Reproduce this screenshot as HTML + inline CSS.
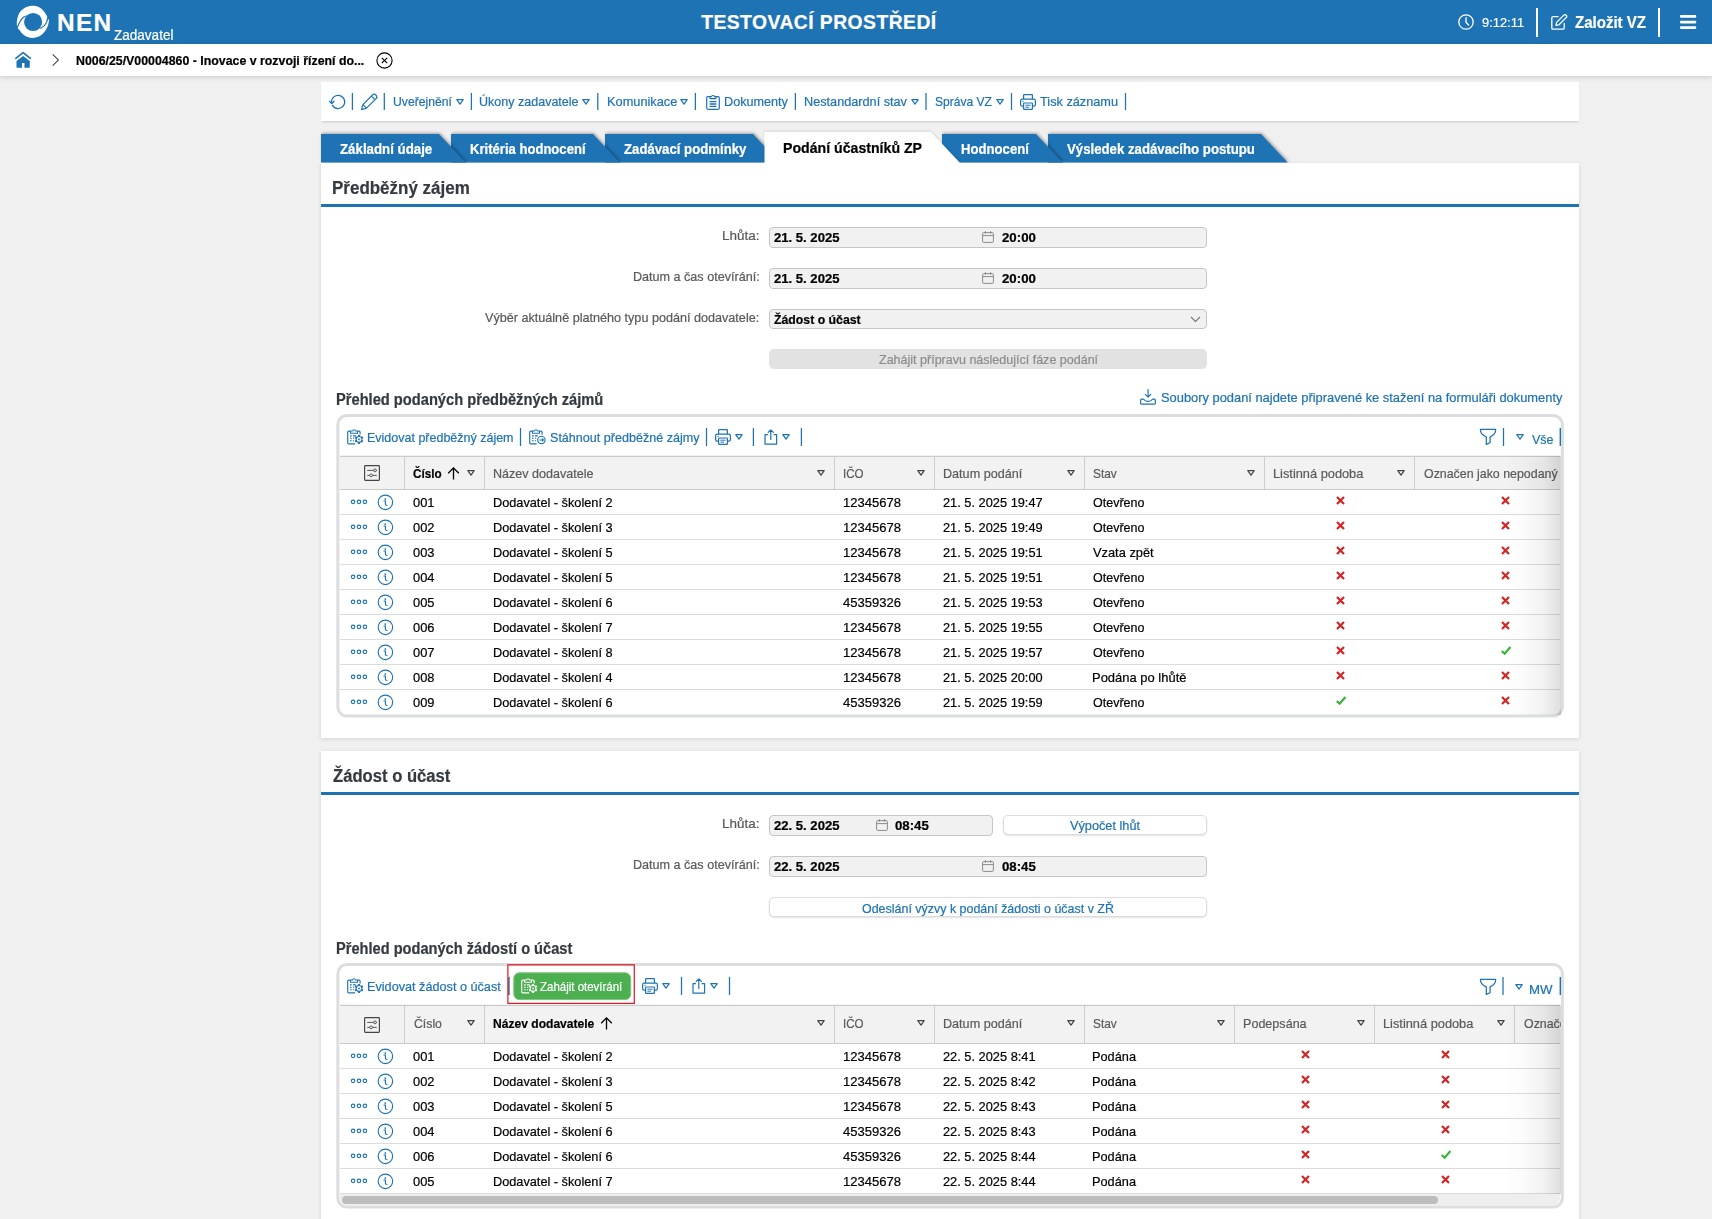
<!DOCTYPE html>
<html lang="cs"><head><meta charset="utf-8"><title>NEN</title>
<style>
html,body{margin:0;padding:0;}
body{width:1712px;height:1219px;overflow:hidden;background:#f0f0f0;font-family:"Liberation Sans",sans-serif;position:relative;}
.b{position:absolute;box-sizing:border-box;display:block;}
.t{position:absolute;white-space:nowrap;line-height:1;display:block;-webkit-text-stroke:0.22px;}
svg{overflow:visible;}
</style></head><body>
<div class="b" style="left:0px;top:0px;width:1712px;height:44px;background:#1e73b4;"></div>
<svg class="b" style="left:17px;top:6px;" width="32" height="32" viewBox="0 0 32 32"><path d="M0.04 20.90 C0.01 20.03 -0.35 17.62 -0.14 15.66 C0.07 13.70 0.46 11.09 1.30 9.16 C2.14 7.23 3.40 5.48 4.90 4.10 C6.40 2.72 8.55 1.58 10.30 0.86 C12.05 0.14 13.58 -0.22 15.40 -0.22 C17.22 -0.22 19.40 0.08 21.20 0.86 C23.00 1.64 24.82 3.09 26.20 4.47 C27.58 5.85 28.83 8.02 29.50 9.16 C30.17 10.30 30.27 10.22 30.20 11.30 C30.13 12.38 29.65 14.33 29.10 15.66 C28.55 16.99 27.92 18.22 26.90 19.30 C25.88 20.38 23.62 21.68 22.96 22.16 L16 16 L3 17 Z" fill="#fff"/><path d="M32.00 13.10 C31.97 13.53 32.05 14.43 31.80 15.70 C31.55 16.97 31.32 18.90 30.50 20.70 C29.68 22.50 28.33 24.87 26.90 26.50 C25.47 28.13 23.82 29.60 21.90 30.50 C19.98 31.40 17.52 31.90 15.40 31.90 C13.28 31.90 10.95 31.28 9.20 30.50 C7.45 29.72 5.98 28.23 4.90 27.20 C3.83 26.17 3.44 25.27 2.75 24.30 C2.06 23.33 0.64 22.72 0.76 21.40 C0.89 20.08 2.63 17.83 3.50 16.40 C4.37 14.97 5.17 13.83 6.00 12.80 C6.83 11.77 8.08 10.63 8.50 10.20 L16 16 L29 15 Z" fill="#fff"/><circle cx="16.1" cy="16" r="9.05" fill="#1e73b4"/><path d="M0.30 21.30 C0.71 20.42 1.89 17.51 2.75 16.00 C3.61 14.49 4.48 13.27 5.45 12.25 C6.42 11.23 8.07 10.29 8.60 9.90" fill="none" stroke="#1e73b4" stroke-width="1.1"/><path d="M31.00 11.90 C30.77 12.58 30.27 14.71 29.65 16.00 C29.03 17.29 28.38 18.57 27.30 19.65 C26.23 20.73 23.88 22.02 23.20 22.50" fill="none" stroke="#1e73b4" stroke-width="1.1"/></svg>
<span class="t" style="left:56.91px;top:11.35px;font-size:24.4px;font-weight:bold;color:#fff;letter-spacing:1.394px;">NEN</span>
<span class="t" style="left:113.79px;top:27.30px;font-size:15px;color:#fff;transform:scaleX(0.9023);transform-origin:0 0;">Zadavatel</span>
<span class="t" style="left:701.21px;top:12.66px;font-size:19.3px;font-weight:bold;color:#fff;letter-spacing:0.474px;">TESTOVACÍ PROSTŘEDÍ</span>
<svg class="b" style="left:1457.7px;top:14px;" width="16" height="16" viewBox="0 0 16 16"><circle cx="8" cy="8" r="7.2" fill="none" stroke="#fff" stroke-width="1.3"/><path d="M8 3.6 V8.2 L10.6 11" fill="none" stroke="#fff" stroke-width="1.3" stroke-linecap="round"/></svg>
<span class="t" style="left:1481.62px;top:15.69px;font-size:13.6px;color:#fff;transform:scaleX(0.9487);transform-origin:0 0;">9:12:11</span>
<div class="b" style="left:1536px;top:8px;width:2px;height:29px;background:#fff;"></div>
<svg class="b" style="left:1550.5px;top:14px;" width="17" height="16" viewBox="0 0 17 16"><path d="M7.6 2.6 H2 A1.2 1.2 0 0 0 0.8 3.8 V14 A1.2 1.2 0 0 0 2 15.2 H12 A1.2 1.2 0 0 0 13.2 14 V9" fill="none" stroke="#fff" stroke-width="1.3"/><path d="M5.6 8.4 L13 1 A1.3 1.3 0 0 1 14.9 1 L15.4 1.5 A1.3 1.3 0 0 1 15.4 3.4 L8 10.8 L5 11.4 Z" fill="none" stroke="#fff" stroke-width="1.3" stroke-linejoin="round"/></svg>
<span class="t" style="left:1575.22px;top:14.71px;font-size:16px;font-weight:bold;color:#fff;transform:scaleX(0.9395);transform-origin:0 0;">Založit VZ</span>
<div class="b" style="left:1658px;top:8px;width:2px;height:29px;background:#fff;"></div>
<svg class="b" style="left:1680px;top:14px;" width="16" height="16" viewBox="0 0 16 16"><rect x="0" y="1.1" width="16.2" height="2.7" rx="0.8" fill="#fff"/><rect x="0" y="6.7" width="16.2" height="2.7" rx="0.8" fill="#fff"/><rect x="0" y="12.2" width="16.2" height="2.7" rx="0.8" fill="#fff"/></svg>
<div class="b" style="left:0px;top:44px;width:1712px;height:32px;background:#fff;box-shadow:0 1px 5px rgba(0,0,0,.17);"></div>
<svg class="b" style="left:15px;top:51px;" width="17" height="18" viewBox="0 0 17 18"><path d="M0.8 7.3 L8.1 1.6 L15.4 7.3" fill="none" stroke="#1e73b4" stroke-width="1.7" stroke-linecap="round" stroke-linejoin="round"/><path d="M8.1 5.1 L14.8 10 V16 A0.7 0.7 0 0 1 14.1 16.7 H9.45 V12 H7 V16.7 H2.2 A0.7 0.7 0 0 1 1.5 16 V10 Z" fill="#1e73b4"/></svg>
<svg class="b" style="left:52px;top:54px;" width="8" height="13" viewBox="0 0 8 13"><path d="M0.7 0.4 L6.5 6 L0.7 11.6" fill="none" stroke="#44445a" stroke-width="1.05"/></svg>
<span class="t" style="left:75.90px;top:54.00px;font-size:13px;font-weight:bold;color:#000;transform:scaleX(0.9499);transform-origin:0 0;">N006/25/V00004860 - Inovace v rozvoji řízení do...</span>
<svg class="b" style="left:376.1px;top:51.5px;" width="17" height="17" viewBox="0 0 17 17"><circle cx="8.5" cy="8.5" r="7.6" fill="none" stroke="#000" stroke-width="1.1"/><path d="M5.8 5.8 L11.2 11.2 M11.2 5.8 L5.8 11.2" stroke="#000" stroke-width="1.1"/></svg>
<div class="b" style="left:321px;top:82px;width:1258px;height:39px;background:#fff;box-shadow:0 2px 2px -1px rgba(0,0,0,.16);"></div>
<svg class="b" style="left:329px;top:94px;" width="17" height="16" viewBox="0 0 17 16"><path d="M3.5 11.4 A6.6 6.6 0 1 0 2.55 8.6" fill="none" stroke="#1e73b4" stroke-width="1.25" stroke-linecap="round"/><path d="M0.4 7.2 L2.65 9.7 L5 7.2" fill="none" stroke="#1e73b4" stroke-width="1.25" stroke-linecap="round" stroke-linejoin="round"/></svg>
<svg class="b" style="left:350px;top:93px;" width="6" height="17"><rect x="1.77" y="0" width="1.25" height="17" fill="#1e73b4"/></svg>
<svg class="b" style="left:361px;top:94px;" width="17" height="17" viewBox="0 0 17 17"><path d="M0.5 15.6 L1.9 10.6 L11.5 1 A2.55 2.55 0 0 1 15.1 4.6 L5.5 14.2 Z M1.9 10.6 L5.5 14.2 M10.5 2.1 L14 5.6" fill="none" stroke="#1e73b4" stroke-width="1.2" stroke-linejoin="round"/></svg>
<svg class="b" style="left:382px;top:93px;" width="6" height="17"><rect x="1.68" y="0" width="1.25" height="17" fill="#1e73b4"/></svg>
<span class="t" style="left:392.79px;top:95.16px;font-size:13.4px;color:#1e73b4;transform:scaleX(0.9093);transform-origin:0 0;">Uveřejnění</span>
<svg class="b" style="left:456px;top:99px;" width="8" height="6" viewBox="0 0 8 6"><path d="M0.8 0.6 L7.2 0.6 L4 5.2 Z" fill="none" stroke="#1e73b4" stroke-width="1.2" stroke-linejoin="round"/></svg>
<svg class="b" style="left:469px;top:93px;" width="6" height="17"><rect x="1.77" y="0" width="1.25" height="17" fill="#1e73b4"/></svg>
<span class="t" style="left:479.36px;top:95.16px;font-size:13.4px;color:#1e73b4;transform:scaleX(0.9353);transform-origin:0 0;">Úkony zadavatele</span>
<svg class="b" style="left:582px;top:99px;" width="8" height="6" viewBox="0 0 8 6"><path d="M0.8 0.6 L7.2 0.6 L4 5.2 Z" fill="none" stroke="#1e73b4" stroke-width="1.2" stroke-linejoin="round"/></svg>
<svg class="b" style="left:595px;top:93px;" width="6" height="17"><rect x="2.17" y="0" width="1.25" height="17" fill="#1e73b4"/></svg>
<span class="t" style="left:606.58px;top:95.16px;font-size:13.4px;color:#1e73b4;transform:scaleX(0.9543);transform-origin:0 0;">Komunikace</span>
<svg class="b" style="left:680px;top:99px;" width="8" height="6" viewBox="0 0 8 6"><path d="M0.8 0.6 L7.2 0.6 L4 5.2 Z" fill="none" stroke="#1e73b4" stroke-width="1.2" stroke-linejoin="round"/></svg>
<svg class="b" style="left:693px;top:93px;" width="6" height="17"><rect x="1.77" y="0" width="1.25" height="17" fill="#1e73b4"/></svg>
<svg class="b" style="left:706px;top:94px;" width="14" height="16" viewBox="0 0 14 16"><rect x="0.7" y="2.6" width="12.6" height="12.7" rx="1.2" fill="none" stroke="#1e73b4" stroke-width="1.2"/><path d="M4 2.6 L5.4 2.6 A1.7 1.7 0 0 1 8.6 2.6 L10 2.6 L10 4.6 L4 4.6 Z" fill="#fff" stroke="#1e73b4" stroke-width="1.1" stroke-linejoin="round"/><path d="M3.6 7.6 H10.4 M3.6 10 H10.4 M3.6 12.4 H10.4" stroke="#1e73b4" stroke-width="1.3"/></svg>
<span class="t" style="left:723.99px;top:95.16px;font-size:13.4px;color:#1e73b4;transform:scaleX(0.9441);transform-origin:0 0;">Dokumenty</span>
<svg class="b" style="left:793px;top:93px;" width="6" height="17"><rect x="1.77" y="0" width="1.25" height="17" fill="#1e73b4"/></svg>
<span class="t" style="left:804.28px;top:95.16px;font-size:13.4px;color:#1e73b4;transform:scaleX(0.9473);transform-origin:0 0;">Nestandardní stav</span>
<svg class="b" style="left:911px;top:99px;" width="8" height="6" viewBox="0 0 8 6"><path d="M0.8 0.6 L7.2 0.6 L4 5.2 Z" fill="none" stroke="#1e73b4" stroke-width="1.2" stroke-linejoin="round"/></svg>
<svg class="b" style="left:924px;top:93px;" width="6" height="17"><rect x="1.38" y="0" width="1.25" height="17" fill="#1e73b4"/></svg>
<span class="t" style="left:935.46px;top:95.16px;font-size:13.4px;color:#1e73b4;transform:scaleX(0.8987);transform-origin:0 0;">Správa VZ</span>
<svg class="b" style="left:996px;top:99px;" width="8" height="6" viewBox="0 0 8 6"><path d="M0.8 0.6 L7.2 0.6 L4 5.2 Z" fill="none" stroke="#1e73b4" stroke-width="1.2" stroke-linejoin="round"/></svg>
<svg class="b" style="left:1009px;top:93px;" width="6" height="17"><rect x="1.88" y="0" width="1.25" height="17" fill="#1e73b4"/></svg>
<svg class="b" style="left:1020px;top:94px;" width="16" height="16" viewBox="0 0 16 16"><path d="M3.6 5.2 V1.2 A0.6 0.6 0 0 1 4.2 0.6 H11.8 A0.6 0.6 0 0 1 12.4 1.2 V5.2" fill="none" stroke="#1e73b4" stroke-width="1.2"/><rect x="0.6" y="5.2" width="14.8" height="7" rx="1.6" fill="none" stroke="#1e73b4" stroke-width="1.2"/><rect x="3.6" y="9" width="8.8" height="6.4" rx="0.6" fill="#fff" stroke="#1e73b4" stroke-width="1.2"/><path d="M5.4 11.2 H10.6 M5.4 13.2 H9 M2.4 7.4 H3.6" stroke="#1e73b4" stroke-width="1"/></svg>
<span class="t" style="left:1040.25px;top:95.16px;font-size:13.4px;color:#1e73b4;transform:scaleX(0.9506);transform-origin:0 0;">Tisk záznamu</span>
<svg class="b" style="left:1123px;top:93px;" width="6" height="17"><rect x="1.88" y="0" width="1.25" height="17" fill="#1e73b4"/></svg>
<div class="b" style="left:321px;top:163px;width:1258px;height:575px;background:#fff;box-shadow:0 1px 4px rgba(0,0,0,.13);"></div>
<div class="b" style="left:321px;top:751px;width:1258px;height:480px;background:#fff;box-shadow:0 1px 4px rgba(0,0,0,.13);"></div>
<svg class="b" style="left:0;top:0;filter:drop-shadow(1px -0.5px 1.5px rgba(0,0,0,.32));" width="1712" height="170"><polygon points="1048,134 1261,134 1287.8,162.6 1048,162.6" fill="#1e73b4"/></svg>
<svg class="b" style="left:0;top:0;filter:drop-shadow(1px -0.5px 1.5px rgba(0,0,0,.32));" width="1712" height="170"><polygon points="942,134 1036,134 1062.8,162.6 942,162.6" fill="#1e73b4"/></svg>
<svg class="b" style="left:0;top:0;filter:drop-shadow(1px -0.5px 1.5px rgba(0,0,0,.32));" width="1712" height="170"><polygon points="605,134 753,134 779.8,162.6 605,162.6" fill="#1e73b4"/></svg>
<svg class="b" style="left:0;top:0;filter:drop-shadow(1px -0.5px 1.5px rgba(0,0,0,.32));" width="1712" height="170"><polygon points="451,134 593,134 619.8,162.6 451,162.6" fill="#1e73b4"/></svg>
<svg class="b" style="left:0;top:0;filter:drop-shadow(1px -0.5px 1.5px rgba(0,0,0,.32));" width="1712" height="170"><polygon points="321,134 439,134 465.8,162.6 321,162.6" fill="#1e73b4"/></svg>
<svg class="b" style="left:0;top:0;filter:drop-shadow(0px -1px 1.2px rgba(0,0,0,.10));" width="1712" height="170"><polygon points="764.5,132 931,132 960.5,163.5 764.5,163.5" fill="#fff"/></svg>
<div class="b" style="left:321px;top:163px;width:1258px;height:8px;background:#fff;"></div>
<span class="t" style="left:339.67px;top:142.25px;font-size:14px;font-weight:bold;color:#fff;transform:scaleX(0.9486);transform-origin:0 0;">Základní údaje</span>
<span class="t" style="left:470.35px;top:142.25px;font-size:14px;font-weight:bold;color:#fff;transform:scaleX(0.9340);transform-origin:0 0;">Kritéria hodnocení</span>
<span class="t" style="left:623.67px;top:142.25px;font-size:14px;font-weight:bold;color:#fff;transform:scaleX(0.9416);transform-origin:0 0;">Zadávací podmínky</span>
<span class="t" style="left:783.38px;top:140.30px;font-size:15px;font-weight:bold;color:#000;transform:scaleX(0.9425);transform-origin:0 0;">Podání účastníků ZP</span>
<span class="t" style="left:961.05px;top:142.25px;font-size:14px;font-weight:bold;color:#fff;transform:scaleX(0.9385);transform-origin:0 0;">Hodnocení</span>
<span class="t" style="left:1066.93px;top:142.25px;font-size:14px;font-weight:bold;color:#fff;transform:scaleX(0.9436);transform-origin:0 0;">Výsledek zadávacího postupu</span>
<span class="t" style="left:332.30px;top:179.09px;font-size:18.8px;font-weight:bold;color:#343a40;transform:scaleX(0.9041);transform-origin:0 0;">Předběžný zájem</span>
<div class="b" style="left:321px;top:204px;width:1258px;height:3px;background:#1e73b4;"></div>
<span class="t" style="left:722.12px;top:228.80px;font-size:13px;color:#5a5a5a;transform:scaleX(1.0354);transform-origin:0 0;">Lhůta:</span>
<div class="b" style="left:769px;top:227px;width:438px;height:21px;background:#f1f1f1;border:1px solid #c6c6c6;border-radius:4px;"></div>
<span class="t" style="left:773.61px;top:231.90px;font-size:12.4px;font-weight:bold;color:#000;transform:scaleX(1.0557);transform-origin:0 0;">21. 5. 2025</span>
<svg class="b" style="left:982px;top:230.6px;" width="12" height="12" viewBox="0 0 12 12"><rect x="0.6" y="1.6" width="10.8" height="9.8" rx="1" fill="none" stroke="#8a8a8a" stroke-width="1"/><path d="M0.6 4.6 H11.4 M3.4 0.2 V2.8 M8.6 0.2 V2.8" stroke="#8a8a8a" stroke-width="1"/></svg>
<span class="t" style="left:1001.60px;top:231.90px;font-size:12.4px;font-weight:bold;color:#000;transform:scaleX(1.0688);transform-origin:0 0;">20:00</span>
<span class="t" style="left:632.89px;top:269.80px;font-size:13px;color:#5a5a5a;transform:scaleX(0.9683);transform-origin:0 0;">Datum a čas otevírání:</span>
<div class="b" style="left:769px;top:268px;width:438px;height:21px;background:#f1f1f1;border:1px solid #c6c6c6;border-radius:4px;"></div>
<span class="t" style="left:773.61px;top:272.90px;font-size:12.4px;font-weight:bold;color:#000;transform:scaleX(1.0557);transform-origin:0 0;">21. 5. 2025</span>
<svg class="b" style="left:982px;top:271.6px;" width="12" height="12" viewBox="0 0 12 12"><rect x="0.6" y="1.6" width="10.8" height="9.8" rx="1" fill="none" stroke="#8a8a8a" stroke-width="1"/><path d="M0.6 4.6 H11.4 M3.4 0.2 V2.8 M8.6 0.2 V2.8" stroke="#8a8a8a" stroke-width="1"/></svg>
<span class="t" style="left:1001.60px;top:272.90px;font-size:12.4px;font-weight:bold;color:#000;transform:scaleX(1.0688);transform-origin:0 0;">20:00</span>
<span class="t" style="left:485.30px;top:310.80px;font-size:13px;color:#5a5a5a;transform:scaleX(0.9703);transform-origin:0 0;">Výběr aktuálně platného typu podání dodavatele:</span>
<div class="b" style="left:769px;top:309px;width:438px;height:20px;background:#f1f1f1;border:1px solid #c6c6c6;border-radius:4px;"></div>
<span class="t" style="left:773.69px;top:313.90px;font-size:12.4px;font-weight:bold;color:#000;transform:scaleX(0.9907);transform-origin:0 0;">Žádost o účast</span>
<svg class="b" style="left:1190px;top:316px;" width="11" height="7" viewBox="0 0 11 7"><path d="M1 1 L5.5 5.4 L10 1" fill="none" stroke="#777" stroke-width="1.1"/></svg>
<div class="b" style="left:769px;top:349px;width:438px;height:20px;background:#e2e2e2;border-radius:5px;"></div>
<span class="t" style="left:878.82px;top:352.91px;font-size:13.1px;color:#8c8c8c;transform:scaleX(0.9555);transform-origin:0 0;">Zahájit přípravu následující fáze podání</span>
<span class="t" style="left:336.05px;top:391.86px;font-size:16px;font-weight:bold;color:#343a40;transform:scaleX(0.9167);transform-origin:0 0;">Přehled podaných předběžných zájmů</span>
<svg class="b" style="left:1140px;top:389px;" width="16" height="16" viewBox="0 0 16 16"><path d="M8.1 0.5 V8 M5.3 5.4 L8.1 8.2 L10.8 5.4" fill="none" stroke="#1e73b4" stroke-width="1.2" stroke-linecap="round" stroke-linejoin="round"/><path d="M1.6 10.2 H3.7 Q5 12.4 8.1 12.4 Q11.2 12.4 12.5 10.2 H14.4 A1 1 0 0 1 15.4 11.2 V14.1 A1 1 0 0 1 14.4 15.1 H1.6 A1 1 0 0 1 0.6 14.1 V11.2 A1 1 0 0 1 1.6 10.2 Z" fill="none" stroke="#1e73b4" stroke-width="1.2" stroke-linejoin="round"/></svg>
<span class="t" style="left:1160.62px;top:391.31px;font-size:13.1px;color:#1e73b4;transform:scaleX(0.9830);transform-origin:0 0;">Soubory podaní najdete připravené ke stažení na formuláři dokumenty</span>
<svg class="b" style="left:330px;top:410px;" width="1240" height="312"><rect x="7.85" y="5.5" width="1224.5" height="300.6" rx="9" fill="#fff" stroke="#dcdddf" stroke-width="3"/></svg>
<div class="b" style="left:340px;top:456px;width:1220px;height:34px;background:#f2f2f2;border-top:1px solid #cbcbcb;border-bottom:1px solid #c9c9c9;box-shadow:0 -1px 0 rgba(0,0,0,.05);"></div>
<div class="b" style="left:404px;top:457px;width:1px;height:32px;background:#cdcdcd;"></div>
<div class="b" style="left:484px;top:457px;width:1px;height:32px;background:#cdcdcd;"></div>
<div class="b" style="left:834px;top:457px;width:1px;height:32px;background:#cdcdcd;"></div>
<div class="b" style="left:934px;top:457px;width:1px;height:32px;background:#cdcdcd;"></div>
<div class="b" style="left:1084px;top:457px;width:1px;height:32px;background:#cdcdcd;"></div>
<div class="b" style="left:1264px;top:457px;width:1px;height:32px;background:#cdcdcd;"></div>
<div class="b" style="left:1414px;top:457px;width:1px;height:32px;background:#cdcdcd;"></div>
<svg class="b" style="left:364px;top:465.0px;" width="16" height="16" viewBox="0 0 16 16"><rect x="0.6" y="0.6" width="14.8" height="14.8" rx="0.8" fill="none" stroke="#444" stroke-width="1.15"/><path d="M3.2 5.4 H12.8 M3.2 10.4 H12.8" stroke="#444" stroke-width="0.9"/><circle cx="11" cy="5.4" r="1.4" fill="#f2f2f2" stroke="#444" stroke-width="0.85"/><circle cx="7.1" cy="10.4" r="1.4" fill="#f2f2f2" stroke="#444" stroke-width="0.85"/></svg>
<span class="t" style="left:412.53px;top:466.69px;font-size:13.6px;font-weight:bold;color:#000;transform:scaleX(0.8625);transform-origin:0 0;">Číslo</span>
<svg class="b" style="left:447px;top:466.59999999999997px;" width="13" height="13" viewBox="0 0 13 13"><path d="M6.5 12.6 V1 M1.2 6.2 L6.5 0.9 L11.8 6.2" fill="none" stroke="#000" stroke-width="1.3"/></svg>
<svg class="b" style="left:467px;top:469.8px;" width="8" height="6" viewBox="0 0 8 6"><path d="M0.8 0.6 L7.2 0.6 L4 5.2 Z" fill="none" stroke="#444" stroke-width="1.2" stroke-linejoin="round"/></svg>
<span class="t" style="left:493.00px;top:466.69px;font-size:13.6px;color:#5a5a5a;transform:scaleX(0.9232);transform-origin:0 0;">Název dodavatele</span>
<svg class="b" style="left:817px;top:469.8px;" width="8" height="6" viewBox="0 0 8 6"><path d="M0.8 0.6 L7.2 0.6 L4 5.2 Z" fill="none" stroke="#444" stroke-width="1.2" stroke-linejoin="round"/></svg>
<span class="t" style="left:842.96px;top:466.69px;font-size:13.6px;color:#5a5a5a;transform:scaleX(0.8519);transform-origin:0 0;">IČO</span>
<svg class="b" style="left:917px;top:469.8px;" width="8" height="6" viewBox="0 0 8 6"><path d="M0.8 0.6 L7.2 0.6 L4 5.2 Z" fill="none" stroke="#444" stroke-width="1.2" stroke-linejoin="round"/></svg>
<span class="t" style="left:943.29px;top:466.69px;font-size:13.6px;color:#5a5a5a;transform:scaleX(0.9274);transform-origin:0 0;">Datum podání</span>
<svg class="b" style="left:1067px;top:469.8px;" width="8" height="6" viewBox="0 0 8 6"><path d="M0.8 0.6 L7.2 0.6 L4 5.2 Z" fill="none" stroke="#444" stroke-width="1.2" stroke-linejoin="round"/></svg>
<span class="t" style="left:1093.07px;top:466.69px;font-size:13.6px;color:#5a5a5a;transform:scaleX(0.8726);transform-origin:0 0;">Stav</span>
<svg class="b" style="left:1247px;top:469.8px;" width="8" height="6" viewBox="0 0 8 6"><path d="M0.8 0.6 L7.2 0.6 L4 5.2 Z" fill="none" stroke="#444" stroke-width="1.2" stroke-linejoin="round"/></svg>
<span class="t" style="left:1273.28px;top:466.69px;font-size:13.6px;color:#5a5a5a;transform:scaleX(0.9411);transform-origin:0 0;">Listinná podoba</span>
<svg class="b" style="left:1397px;top:469.8px;" width="8" height="6" viewBox="0 0 8 6"><path d="M0.8 0.6 L7.2 0.6 L4 5.2 Z" fill="none" stroke="#444" stroke-width="1.2" stroke-linejoin="round"/></svg>
<span class="t" style="left:1423.84px;top:466.69px;font-size:13.6px;color:#5a5a5a;transform:scaleX(0.9112);transform-origin:0 0;">Označen jako nepodaný</span>
<div class="b" style="left:340px;top:514px;width:1220px;height:1px;background:#dcdcdc;"></div>
<svg class="b" style="left:351px;top:499.1px;" width="17" height="6" viewBox="0 0 17 6"><circle cx="2.1" cy="2.8" r="1.75" fill="none" stroke="#1e73b4" stroke-width="1.15"/><circle cx="8" cy="2.8" r="1.75" fill="none" stroke="#1e73b4" stroke-width="1.15"/><circle cx="13.9" cy="2.8" r="1.75" fill="none" stroke="#1e73b4" stroke-width="1.15"/></svg>
<svg class="b" style="left:376.9px;top:493.55px;" width="17" height="17" viewBox="0 0 17 17"><circle cx="8.4" cy="8.3" r="7.25" fill="none" stroke="#1e73b4" stroke-width="1.15"/><circle cx="8.3" cy="5.1" r="0.9" fill="#1e73b4"/><path d="M7 7 H8.4 V10.3 Q8.4 11.5 10 11.5" fill="none" stroke="#1e73b4" stroke-width="1.15" stroke-linecap="round"/></svg>
<span class="t" style="left:412.85px;top:495.69px;font-size:13.6px;color:#000;transform:scaleX(0.9480);transform-origin:0 0;">001</span>
<span class="t" style="left:492.63px;top:495.69px;font-size:13.6px;color:#000;transform:scaleX(0.9363);transform-origin:0 0;">Dodavatel - školení 2</span>
<span class="t" style="left:843.02px;top:495.69px;font-size:13.6px;color:#000;transform:scaleX(0.9583);transform-origin:0 0;">12345678</span>
<span class="t" style="left:943.46px;top:495.69px;font-size:13.6px;color:#000;transform:scaleX(0.9418);transform-origin:0 0;">21. 5. 2025 19:47</span>
<span class="t" style="left:1092.94px;top:495.69px;font-size:13.6px;color:#000;transform:scaleX(0.9189);transform-origin:0 0;">Otevřeno</span>
<svg class="b" style="left:1336.1px;top:495.9px;" width="9" height="9" viewBox="0 0 9 9"><path d="M1 1 L8 8 M8 1 L1 8" stroke="#d32525" stroke-width="2.2" stroke-linecap="butt"/></svg>
<svg class="b" style="left:1500.5px;top:495.9px;" width="9" height="9" viewBox="0 0 9 9"><path d="M1 1 L8 8 M8 1 L1 8" stroke="#d32525" stroke-width="2.2" stroke-linecap="butt"/></svg>
<div class="b" style="left:340px;top:539px;width:1220px;height:1px;background:#dcdcdc;"></div>
<svg class="b" style="left:351px;top:524.1px;" width="17" height="6" viewBox="0 0 17 6"><circle cx="2.1" cy="2.8" r="1.75" fill="none" stroke="#1e73b4" stroke-width="1.15"/><circle cx="8" cy="2.8" r="1.75" fill="none" stroke="#1e73b4" stroke-width="1.15"/><circle cx="13.9" cy="2.8" r="1.75" fill="none" stroke="#1e73b4" stroke-width="1.15"/></svg>
<svg class="b" style="left:376.9px;top:518.55px;" width="17" height="17" viewBox="0 0 17 17"><circle cx="8.4" cy="8.3" r="7.25" fill="none" stroke="#1e73b4" stroke-width="1.15"/><circle cx="8.3" cy="5.1" r="0.9" fill="#1e73b4"/><path d="M7 7 H8.4 V10.3 Q8.4 11.5 10 11.5" fill="none" stroke="#1e73b4" stroke-width="1.15" stroke-linecap="round"/></svg>
<span class="t" style="left:412.85px;top:520.69px;font-size:13.6px;color:#000;transform:scaleX(0.9480);transform-origin:0 0;">002</span>
<span class="t" style="left:492.63px;top:520.69px;font-size:13.6px;color:#000;transform:scaleX(0.9363);transform-origin:0 0;">Dodavatel - školení 3</span>
<span class="t" style="left:843.02px;top:520.69px;font-size:13.6px;color:#000;transform:scaleX(0.9583);transform-origin:0 0;">12345678</span>
<span class="t" style="left:943.46px;top:520.69px;font-size:13.6px;color:#000;transform:scaleX(0.9418);transform-origin:0 0;">21. 5. 2025 19:49</span>
<span class="t" style="left:1092.94px;top:520.69px;font-size:13.6px;color:#000;transform:scaleX(0.9189);transform-origin:0 0;">Otevřeno</span>
<svg class="b" style="left:1336.1px;top:520.9px;" width="9" height="9" viewBox="0 0 9 9"><path d="M1 1 L8 8 M8 1 L1 8" stroke="#d32525" stroke-width="2.2" stroke-linecap="butt"/></svg>
<svg class="b" style="left:1500.5px;top:520.9px;" width="9" height="9" viewBox="0 0 9 9"><path d="M1 1 L8 8 M8 1 L1 8" stroke="#d32525" stroke-width="2.2" stroke-linecap="butt"/></svg>
<div class="b" style="left:340px;top:564px;width:1220px;height:1px;background:#dcdcdc;"></div>
<svg class="b" style="left:351px;top:549.1px;" width="17" height="6" viewBox="0 0 17 6"><circle cx="2.1" cy="2.8" r="1.75" fill="none" stroke="#1e73b4" stroke-width="1.15"/><circle cx="8" cy="2.8" r="1.75" fill="none" stroke="#1e73b4" stroke-width="1.15"/><circle cx="13.9" cy="2.8" r="1.75" fill="none" stroke="#1e73b4" stroke-width="1.15"/></svg>
<svg class="b" style="left:376.9px;top:543.55px;" width="17" height="17" viewBox="0 0 17 17"><circle cx="8.4" cy="8.3" r="7.25" fill="none" stroke="#1e73b4" stroke-width="1.15"/><circle cx="8.3" cy="5.1" r="0.9" fill="#1e73b4"/><path d="M7 7 H8.4 V10.3 Q8.4 11.5 10 11.5" fill="none" stroke="#1e73b4" stroke-width="1.15" stroke-linecap="round"/></svg>
<span class="t" style="left:412.85px;top:545.69px;font-size:13.6px;color:#000;transform:scaleX(0.9480);transform-origin:0 0;">003</span>
<span class="t" style="left:492.63px;top:545.69px;font-size:13.6px;color:#000;transform:scaleX(0.9363);transform-origin:0 0;">Dodavatel - školení 5</span>
<span class="t" style="left:843.02px;top:545.69px;font-size:13.6px;color:#000;transform:scaleX(0.9583);transform-origin:0 0;">12345678</span>
<span class="t" style="left:943.46px;top:545.69px;font-size:13.6px;color:#000;transform:scaleX(0.9418);transform-origin:0 0;">21. 5. 2025 19:51</span>
<span class="t" style="left:1092.80px;top:545.69px;font-size:13.6px;color:#000;transform:scaleX(0.9440);transform-origin:0 0;">Vzata zpět</span>
<svg class="b" style="left:1336.1px;top:545.9px;" width="9" height="9" viewBox="0 0 9 9"><path d="M1 1 L8 8 M8 1 L1 8" stroke="#d32525" stroke-width="2.2" stroke-linecap="butt"/></svg>
<svg class="b" style="left:1500.5px;top:545.9px;" width="9" height="9" viewBox="0 0 9 9"><path d="M1 1 L8 8 M8 1 L1 8" stroke="#d32525" stroke-width="2.2" stroke-linecap="butt"/></svg>
<div class="b" style="left:340px;top:589px;width:1220px;height:1px;background:#dcdcdc;"></div>
<svg class="b" style="left:351px;top:574.1px;" width="17" height="6" viewBox="0 0 17 6"><circle cx="2.1" cy="2.8" r="1.75" fill="none" stroke="#1e73b4" stroke-width="1.15"/><circle cx="8" cy="2.8" r="1.75" fill="none" stroke="#1e73b4" stroke-width="1.15"/><circle cx="13.9" cy="2.8" r="1.75" fill="none" stroke="#1e73b4" stroke-width="1.15"/></svg>
<svg class="b" style="left:376.9px;top:568.55px;" width="17" height="17" viewBox="0 0 17 17"><circle cx="8.4" cy="8.3" r="7.25" fill="none" stroke="#1e73b4" stroke-width="1.15"/><circle cx="8.3" cy="5.1" r="0.9" fill="#1e73b4"/><path d="M7 7 H8.4 V10.3 Q8.4 11.5 10 11.5" fill="none" stroke="#1e73b4" stroke-width="1.15" stroke-linecap="round"/></svg>
<span class="t" style="left:412.85px;top:570.69px;font-size:13.6px;color:#000;transform:scaleX(0.9480);transform-origin:0 0;">004</span>
<span class="t" style="left:492.63px;top:570.69px;font-size:13.6px;color:#000;transform:scaleX(0.9363);transform-origin:0 0;">Dodavatel - školení 5</span>
<span class="t" style="left:843.02px;top:570.69px;font-size:13.6px;color:#000;transform:scaleX(0.9583);transform-origin:0 0;">12345678</span>
<span class="t" style="left:943.46px;top:570.69px;font-size:13.6px;color:#000;transform:scaleX(0.9418);transform-origin:0 0;">21. 5. 2025 19:51</span>
<span class="t" style="left:1092.94px;top:570.69px;font-size:13.6px;color:#000;transform:scaleX(0.9189);transform-origin:0 0;">Otevřeno</span>
<svg class="b" style="left:1336.1px;top:570.9px;" width="9" height="9" viewBox="0 0 9 9"><path d="M1 1 L8 8 M8 1 L1 8" stroke="#d32525" stroke-width="2.2" stroke-linecap="butt"/></svg>
<svg class="b" style="left:1500.5px;top:570.9px;" width="9" height="9" viewBox="0 0 9 9"><path d="M1 1 L8 8 M8 1 L1 8" stroke="#d32525" stroke-width="2.2" stroke-linecap="butt"/></svg>
<div class="b" style="left:340px;top:614px;width:1220px;height:1px;background:#dcdcdc;"></div>
<svg class="b" style="left:351px;top:599.1px;" width="17" height="6" viewBox="0 0 17 6"><circle cx="2.1" cy="2.8" r="1.75" fill="none" stroke="#1e73b4" stroke-width="1.15"/><circle cx="8" cy="2.8" r="1.75" fill="none" stroke="#1e73b4" stroke-width="1.15"/><circle cx="13.9" cy="2.8" r="1.75" fill="none" stroke="#1e73b4" stroke-width="1.15"/></svg>
<svg class="b" style="left:376.9px;top:593.55px;" width="17" height="17" viewBox="0 0 17 17"><circle cx="8.4" cy="8.3" r="7.25" fill="none" stroke="#1e73b4" stroke-width="1.15"/><circle cx="8.3" cy="5.1" r="0.9" fill="#1e73b4"/><path d="M7 7 H8.4 V10.3 Q8.4 11.5 10 11.5" fill="none" stroke="#1e73b4" stroke-width="1.15" stroke-linecap="round"/></svg>
<span class="t" style="left:412.85px;top:595.69px;font-size:13.6px;color:#000;transform:scaleX(0.9480);transform-origin:0 0;">005</span>
<span class="t" style="left:492.63px;top:595.69px;font-size:13.6px;color:#000;transform:scaleX(0.9363);transform-origin:0 0;">Dodavatel - školení 6</span>
<span class="t" style="left:843.02px;top:595.69px;font-size:13.6px;color:#000;transform:scaleX(0.9583);transform-origin:0 0;">45359326</span>
<span class="t" style="left:943.46px;top:595.69px;font-size:13.6px;color:#000;transform:scaleX(0.9418);transform-origin:0 0;">21. 5. 2025 19:53</span>
<span class="t" style="left:1092.94px;top:595.69px;font-size:13.6px;color:#000;transform:scaleX(0.9189);transform-origin:0 0;">Otevřeno</span>
<svg class="b" style="left:1336.1px;top:595.9px;" width="9" height="9" viewBox="0 0 9 9"><path d="M1 1 L8 8 M8 1 L1 8" stroke="#d32525" stroke-width="2.2" stroke-linecap="butt"/></svg>
<svg class="b" style="left:1500.5px;top:595.9px;" width="9" height="9" viewBox="0 0 9 9"><path d="M1 1 L8 8 M8 1 L1 8" stroke="#d32525" stroke-width="2.2" stroke-linecap="butt"/></svg>
<div class="b" style="left:340px;top:639px;width:1220px;height:1px;background:#dcdcdc;"></div>
<svg class="b" style="left:351px;top:624.1px;" width="17" height="6" viewBox="0 0 17 6"><circle cx="2.1" cy="2.8" r="1.75" fill="none" stroke="#1e73b4" stroke-width="1.15"/><circle cx="8" cy="2.8" r="1.75" fill="none" stroke="#1e73b4" stroke-width="1.15"/><circle cx="13.9" cy="2.8" r="1.75" fill="none" stroke="#1e73b4" stroke-width="1.15"/></svg>
<svg class="b" style="left:376.9px;top:618.55px;" width="17" height="17" viewBox="0 0 17 17"><circle cx="8.4" cy="8.3" r="7.25" fill="none" stroke="#1e73b4" stroke-width="1.15"/><circle cx="8.3" cy="5.1" r="0.9" fill="#1e73b4"/><path d="M7 7 H8.4 V10.3 Q8.4 11.5 10 11.5" fill="none" stroke="#1e73b4" stroke-width="1.15" stroke-linecap="round"/></svg>
<span class="t" style="left:412.85px;top:620.69px;font-size:13.6px;color:#000;transform:scaleX(0.9480);transform-origin:0 0;">006</span>
<span class="t" style="left:492.63px;top:620.69px;font-size:13.6px;color:#000;transform:scaleX(0.9363);transform-origin:0 0;">Dodavatel - školení 7</span>
<span class="t" style="left:843.02px;top:620.69px;font-size:13.6px;color:#000;transform:scaleX(0.9583);transform-origin:0 0;">12345678</span>
<span class="t" style="left:943.46px;top:620.69px;font-size:13.6px;color:#000;transform:scaleX(0.9418);transform-origin:0 0;">21. 5. 2025 19:55</span>
<span class="t" style="left:1092.94px;top:620.69px;font-size:13.6px;color:#000;transform:scaleX(0.9189);transform-origin:0 0;">Otevřeno</span>
<svg class="b" style="left:1336.1px;top:620.9px;" width="9" height="9" viewBox="0 0 9 9"><path d="M1 1 L8 8 M8 1 L1 8" stroke="#d32525" stroke-width="2.2" stroke-linecap="butt"/></svg>
<svg class="b" style="left:1500.5px;top:620.9px;" width="9" height="9" viewBox="0 0 9 9"><path d="M1 1 L8 8 M8 1 L1 8" stroke="#d32525" stroke-width="2.2" stroke-linecap="butt"/></svg>
<div class="b" style="left:340px;top:664px;width:1220px;height:1px;background:#dcdcdc;"></div>
<svg class="b" style="left:351px;top:649.1px;" width="17" height="6" viewBox="0 0 17 6"><circle cx="2.1" cy="2.8" r="1.75" fill="none" stroke="#1e73b4" stroke-width="1.15"/><circle cx="8" cy="2.8" r="1.75" fill="none" stroke="#1e73b4" stroke-width="1.15"/><circle cx="13.9" cy="2.8" r="1.75" fill="none" stroke="#1e73b4" stroke-width="1.15"/></svg>
<svg class="b" style="left:376.9px;top:643.55px;" width="17" height="17" viewBox="0 0 17 17"><circle cx="8.4" cy="8.3" r="7.25" fill="none" stroke="#1e73b4" stroke-width="1.15"/><circle cx="8.3" cy="5.1" r="0.9" fill="#1e73b4"/><path d="M7 7 H8.4 V10.3 Q8.4 11.5 10 11.5" fill="none" stroke="#1e73b4" stroke-width="1.15" stroke-linecap="round"/></svg>
<span class="t" style="left:412.85px;top:645.69px;font-size:13.6px;color:#000;transform:scaleX(0.9480);transform-origin:0 0;">007</span>
<span class="t" style="left:492.63px;top:645.69px;font-size:13.6px;color:#000;transform:scaleX(0.9363);transform-origin:0 0;">Dodavatel - školení 8</span>
<span class="t" style="left:843.02px;top:645.69px;font-size:13.6px;color:#000;transform:scaleX(0.9583);transform-origin:0 0;">12345678</span>
<span class="t" style="left:943.46px;top:645.69px;font-size:13.6px;color:#000;transform:scaleX(0.9418);transform-origin:0 0;">21. 5. 2025 19:57</span>
<span class="t" style="left:1092.94px;top:645.69px;font-size:13.6px;color:#000;transform:scaleX(0.9189);transform-origin:0 0;">Otevřeno</span>
<svg class="b" style="left:1336.1px;top:645.9px;" width="9" height="9" viewBox="0 0 9 9"><path d="M1 1 L8 8 M8 1 L1 8" stroke="#d32525" stroke-width="2.2" stroke-linecap="butt"/></svg>
<svg class="b" style="left:1500.6px;top:645.9px;" width="10" height="9" viewBox="0 0 10 9"><path d="M0.8 5 L3.6 7.8 L9.4 1" fill="none" stroke="#36b336" stroke-width="2.1"/></svg>
<div class="b" style="left:340px;top:689px;width:1220px;height:1px;background:#dcdcdc;"></div>
<svg class="b" style="left:351px;top:674.1px;" width="17" height="6" viewBox="0 0 17 6"><circle cx="2.1" cy="2.8" r="1.75" fill="none" stroke="#1e73b4" stroke-width="1.15"/><circle cx="8" cy="2.8" r="1.75" fill="none" stroke="#1e73b4" stroke-width="1.15"/><circle cx="13.9" cy="2.8" r="1.75" fill="none" stroke="#1e73b4" stroke-width="1.15"/></svg>
<svg class="b" style="left:376.9px;top:668.55px;" width="17" height="17" viewBox="0 0 17 17"><circle cx="8.4" cy="8.3" r="7.25" fill="none" stroke="#1e73b4" stroke-width="1.15"/><circle cx="8.3" cy="5.1" r="0.9" fill="#1e73b4"/><path d="M7 7 H8.4 V10.3 Q8.4 11.5 10 11.5" fill="none" stroke="#1e73b4" stroke-width="1.15" stroke-linecap="round"/></svg>
<span class="t" style="left:412.85px;top:670.69px;font-size:13.6px;color:#000;transform:scaleX(0.9480);transform-origin:0 0;">008</span>
<span class="t" style="left:492.63px;top:670.69px;font-size:13.6px;color:#000;transform:scaleX(0.9363);transform-origin:0 0;">Dodavatel - školení 4</span>
<span class="t" style="left:843.02px;top:670.69px;font-size:13.6px;color:#000;transform:scaleX(0.9583);transform-origin:0 0;">12345678</span>
<span class="t" style="left:943.46px;top:670.69px;font-size:13.6px;color:#000;transform:scaleX(0.9418);transform-origin:0 0;">21. 5. 2025 20:00</span>
<span class="t" style="left:1092.46px;top:670.69px;font-size:13.6px;color:#000;transform:scaleX(0.9544);transform-origin:0 0;">Podána po lhůtě</span>
<svg class="b" style="left:1336.1px;top:670.9px;" width="9" height="9" viewBox="0 0 9 9"><path d="M1 1 L8 8 M8 1 L1 8" stroke="#d32525" stroke-width="2.2" stroke-linecap="butt"/></svg>
<svg class="b" style="left:1500.5px;top:670.9px;" width="9" height="9" viewBox="0 0 9 9"><path d="M1 1 L8 8 M8 1 L1 8" stroke="#d32525" stroke-width="2.2" stroke-linecap="butt"/></svg>
<svg class="b" style="left:351px;top:699.1px;" width="17" height="6" viewBox="0 0 17 6"><circle cx="2.1" cy="2.8" r="1.75" fill="none" stroke="#1e73b4" stroke-width="1.15"/><circle cx="8" cy="2.8" r="1.75" fill="none" stroke="#1e73b4" stroke-width="1.15"/><circle cx="13.9" cy="2.8" r="1.75" fill="none" stroke="#1e73b4" stroke-width="1.15"/></svg>
<svg class="b" style="left:376.9px;top:693.55px;" width="17" height="17" viewBox="0 0 17 17"><circle cx="8.4" cy="8.3" r="7.25" fill="none" stroke="#1e73b4" stroke-width="1.15"/><circle cx="8.3" cy="5.1" r="0.9" fill="#1e73b4"/><path d="M7 7 H8.4 V10.3 Q8.4 11.5 10 11.5" fill="none" stroke="#1e73b4" stroke-width="1.15" stroke-linecap="round"/></svg>
<span class="t" style="left:412.85px;top:695.69px;font-size:13.6px;color:#000;transform:scaleX(0.9480);transform-origin:0 0;">009</span>
<span class="t" style="left:492.63px;top:695.69px;font-size:13.6px;color:#000;transform:scaleX(0.9363);transform-origin:0 0;">Dodavatel - školení 6</span>
<span class="t" style="left:843.02px;top:695.69px;font-size:13.6px;color:#000;transform:scaleX(0.9583);transform-origin:0 0;">45359326</span>
<span class="t" style="left:943.46px;top:695.69px;font-size:13.6px;color:#000;transform:scaleX(0.9418);transform-origin:0 0;">21. 5. 2025 19:59</span>
<span class="t" style="left:1092.94px;top:695.69px;font-size:13.6px;color:#000;transform:scaleX(0.9189);transform-origin:0 0;">Otevřeno</span>
<svg class="b" style="left:1336.1999999999998px;top:695.9px;" width="10" height="9" viewBox="0 0 10 9"><path d="M0.8 5 L3.6 7.8 L9.4 1" fill="none" stroke="#36b336" stroke-width="2.1"/></svg>
<svg class="b" style="left:1500.5px;top:695.9px;" width="9" height="9" viewBox="0 0 9 9"><path d="M1 1 L8 8 M8 1 L1 8" stroke="#d32525" stroke-width="2.2" stroke-linecap="butt"/></svg>
<div class="b" style="left:1503px;top:456px;width:58px;height:259px;background:linear-gradient(to right, rgba(0,0,0,0) 0%, rgba(0,0,0,.015) 35%, rgba(0,0,0,.05) 70%, rgba(0,0,0,.13) 100%);"></div>
<svg class="b" style="left:346.5px;top:428px;" width="17" height="17" viewBox="0 0 17 17"><path d="M8.2 15.9 H1.8 A1.1 1.1 0 0 1 0.7 14.8 V4.2 A1.1 1.1 0 0 1 1.8 3.1 H3.4 M10.6 3.1 H12 A1.1 1.1 0 0 1 13.1 4.2 V6.4" fill="none" stroke="#1e73b4" stroke-width="1.15"/><path d="M3.5 5.3 V2.9 H5.5 A1.55 1.55 0 0 1 8.5 2.9 H10.5 V5.3 Z" fill="none" stroke="#1e73b4" stroke-width="1.05" stroke-linejoin="round"/><path d="M3 7.9 H4.7 M5.9 7.9 H8.8 M3 10.3 H4.7 M5.9 10.3 H7.2 M3 12.7 H4.7 M5.9 12.7 H7" stroke="#1e73b4" stroke-width="1.1"/><circle cx="12" cy="11.4" r="2.9" fill="none" stroke="#1e73b4" stroke-width="1.1"/><path d="M14.34 12.75 L15.90 13.65 M12.00 14.10 L12.00 15.90 M9.66 12.75 L8.10 13.65 M9.66 10.05 L8.10 9.15 M12.00 8.70 L12.00 6.90 M14.34 10.05 L15.90 9.15 " stroke="#1e73b4" stroke-width="1.9"/><circle cx="12" cy="11.4" r="0.9" fill="#1e73b4"/></svg>
<span class="t" style="left:367.20px;top:431.19px;font-size:13.6px;color:#1e73b4;transform:scaleX(0.9190);transform-origin:0 0;">Evidovat předběžný zájem</span>
<svg class="b" style="left:518px;top:428px;" width="6" height="18"><rect x="1.88" y="0" width="1.25" height="18" fill="#1e73b4"/></svg>
<svg class="b" style="left:528.5px;top:428px;" width="17" height="17" viewBox="0 0 17 17"><path d="M7.6 15.9 H1.8 A1.1 1.1 0 0 1 0.7 14.8 V4.2 A1.1 1.1 0 0 1 1.8 3.1 H3.4 M10.6 3.1 H12 A1.1 1.1 0 0 1 13.1 4.2 V6.8" fill="none" stroke="#1e73b4" stroke-width="1.15"/><path d="M3.5 5.3 V2.9 H5.5 A1.55 1.55 0 0 1 8.5 2.9 H10.5 V5.3 Z" fill="none" stroke="#1e73b4" stroke-width="1.05" stroke-linejoin="round"/><path d="M3 7.9 H4.7 M5.9 7.9 H8.8 M3 10.3 H4.7 M5.9 10.3 H7.2 M3 12.7 H4.7 M5.9 12.7 H7" stroke="#1e73b4" stroke-width="1.1"/><circle cx="12.4" cy="11.9" r="3.7" fill="none" stroke="#1e73b4" stroke-width="1.15"/><path d="M10.4 11.9 H14.2 M12.9 10.3 L14.5 11.9 L12.9 13.5" fill="none" stroke="#1e73b4" stroke-width="1.05"/></svg>
<span class="t" style="left:549.63px;top:431.19px;font-size:13.6px;color:#1e73b4;transform:scaleX(0.9245);transform-origin:0 0;">Stáhnout předběžné zájmy</span>
<svg class="b" style="left:704px;top:428px;" width="6" height="18"><rect x="1.88" y="0" width="1.25" height="18" fill="#1e73b4"/></svg>
<svg class="b" style="left:714.5px;top:429px;" width="16" height="16" viewBox="0 0 16 16"><path d="M3.6 5.2 V1.2 A0.6 0.6 0 0 1 4.2 0.6 H11.8 A0.6 0.6 0 0 1 12.4 1.2 V5.2" fill="none" stroke="#1e73b4" stroke-width="1.2"/><rect x="0.6" y="5.2" width="14.8" height="7" rx="1.6" fill="none" stroke="#1e73b4" stroke-width="1.2"/><rect x="3.6" y="9" width="8.8" height="6.4" rx="0.6" fill="#fff" stroke="#1e73b4" stroke-width="1.2"/><path d="M5.4 11.2 H10.6 M5.4 13.2 H9 M2.4 7.4 H3.6" stroke="#1e73b4" stroke-width="1"/></svg>
<svg class="b" style="left:735px;top:434px;" width="8" height="6" viewBox="0 0 8 6"><path d="M0.8 0.6 L7.2 0.6 L4 5.2 Z" fill="none" stroke="#1e73b4" stroke-width="1.2" stroke-linejoin="round"/></svg>
<svg class="b" style="left:751px;top:428px;" width="6" height="18"><rect x="1.77" y="0" width="1.25" height="18" fill="#1e73b4"/></svg>
<svg class="b" style="left:763.4px;top:428.5px;" width="16" height="16" viewBox="0 0 16 16"><path d="M5 5.6 H2 V15.2 H13.6 V5.6 H10.6" fill="none" stroke="#1e73b4" stroke-width="1.2" stroke-linejoin="round"/><path d="M7.8 10.4 V1 M5.2 3.4 L7.8 0.8 L10.4 3.4" fill="none" stroke="#1e73b4" stroke-width="1.2" stroke-linecap="round" stroke-linejoin="round"/></svg>
<svg class="b" style="left:782px;top:434px;" width="8" height="6" viewBox="0 0 8 6"><path d="M0.8 0.6 L7.2 0.6 L4 5.2 Z" fill="none" stroke="#1e73b4" stroke-width="1.2" stroke-linejoin="round"/></svg>
<svg class="b" style="left:799px;top:428px;" width="6" height="18"><rect x="1.77" y="0" width="1.25" height="18" fill="#1e73b4"/></svg>
<svg class="b" style="left:1479px;top:428px;" width="18" height="18" viewBox="0 0 18 18"><path d="M1.4 1.4 H16.7 Q16.7 6.6 11.1 8.8 V14.7 L7.3 16.4 V8.8 Q1.4 6.6 1.4 1.4 Z" fill="none" stroke="#1e73b4" stroke-width="1.25" stroke-linejoin="round"/></svg>
<svg class="b" style="left:1501px;top:428px;" width="6" height="18"><rect x="1.88" y="0" width="1.25" height="18" fill="#1e73b4"/></svg>
<svg class="b" style="left:1516px;top:434px;" width="8" height="6" viewBox="0 0 8 6"><path d="M0.8 0.6 L7.2 0.6 L4 5.2 Z" fill="none" stroke="#1e73b4" stroke-width="1.2" stroke-linejoin="round"/></svg>
<span class="t" style="left:1532.00px;top:433.49px;font-size:13.6px;color:#1e73b4;transform:scaleX(0.9191);transform-origin:0 0;">Vše</span>
<svg class="b" style="left:1558px;top:428px;" width="6" height="18"><rect x="1.60" y="0" width="1.4" height="18" fill="#1e73b4"/></svg>
<span class="t" style="left:332.98px;top:767.09px;font-size:18.8px;font-weight:bold;color:#343a40;transform:scaleX(0.8859);transform-origin:0 0;">Žádost o účast</span>
<div class="b" style="left:321px;top:792px;width:1258px;height:3px;background:#1e73b4;"></div>
<span class="t" style="left:722.12px;top:816.80px;font-size:13px;color:#5a5a5a;transform:scaleX(1.0354);transform-origin:0 0;">Lhůta:</span>
<div class="b" style="left:769px;top:815px;width:224px;height:21px;background:#f1f1f1;border:1px solid #c6c6c6;border-radius:4px;"></div>
<span class="t" style="left:773.61px;top:819.90px;font-size:12.4px;font-weight:bold;color:#000;transform:scaleX(1.0557);transform-origin:0 0;">22. 5. 2025</span>
<svg class="b" style="left:875.5px;top:818.6px;" width="12" height="12" viewBox="0 0 12 12"><rect x="0.6" y="1.6" width="10.8" height="9.8" rx="1" fill="none" stroke="#8a8a8a" stroke-width="1"/><path d="M0.6 4.6 H11.4 M3.4 0.2 V2.8 M8.6 0.2 V2.8" stroke="#8a8a8a" stroke-width="1"/></svg>
<span class="t" style="left:894.54px;top:819.90px;font-size:12.4px;font-weight:bold;color:#000;transform:scaleX(1.0666);transform-origin:0 0;">08:45</span>
<div class="b" style="left:1003px;top:815px;width:204px;height:20px;background:#fff;border:1px solid #dcdcdc;border-radius:5px;box-shadow:0 1px 2px rgba(0,0,0,.12);"></div>
<span class="t" style="left:1070.00px;top:818.91px;font-size:13.1px;color:#1e73b4;transform:scaleX(0.9715);transform-origin:0 0;">Výpočet lhůt</span>
<span class="t" style="left:632.89px;top:857.80px;font-size:13px;color:#5a5a5a;transform:scaleX(0.9683);transform-origin:0 0;">Datum a čas otevírání:</span>
<div class="b" style="left:769px;top:856px;width:438px;height:21px;background:#f1f1f1;border:1px solid #c6c6c6;border-radius:4px;"></div>
<span class="t" style="left:773.61px;top:860.90px;font-size:12.4px;font-weight:bold;color:#000;transform:scaleX(1.0557);transform-origin:0 0;">22. 5. 2025</span>
<svg class="b" style="left:982px;top:859.6px;" width="12" height="12" viewBox="0 0 12 12"><rect x="0.6" y="1.6" width="10.8" height="9.8" rx="1" fill="none" stroke="#8a8a8a" stroke-width="1"/><path d="M0.6 4.6 H11.4 M3.4 0.2 V2.8 M8.6 0.2 V2.8" stroke="#8a8a8a" stroke-width="1"/></svg>
<span class="t" style="left:1001.54px;top:860.90px;font-size:12.4px;font-weight:bold;color:#000;transform:scaleX(1.0666);transform-origin:0 0;">08:45</span>
<div class="b" style="left:769px;top:897px;width:438px;height:20px;background:#fff;border:1px solid #dcdcdc;border-radius:5px;box-shadow:0 1px 2px rgba(0,0,0,.12);"></div>
<span class="t" style="left:862.04px;top:901.51px;font-size:13.1px;color:#1e73b4;transform:scaleX(0.9511);transform-origin:0 0;">Odeslání výzvy k podání žádosti o účast v ZŘ</span>
<span class="t" style="left:336.05px;top:940.66px;font-size:16px;font-weight:bold;color:#343a40;transform:scaleX(0.9133);transform-origin:0 0;">Přehled podaných žádostí o účast</span>
<svg class="b" style="left:330px;top:959px;" width="1240" height="254"><rect x="7.85" y="5.5" width="1224.5" height="242.6" rx="9" fill="#fff" stroke="#dcdddf" stroke-width="3"/></svg>
<div class="b" style="left:340px;top:1005px;width:1220px;height:39px;background:#f2f2f2;border-top:1px solid #cbcbcb;border-bottom:1px solid #c9c9c9;box-shadow:0 -1px 0 rgba(0,0,0,.05);"></div>
<div class="b" style="left:404px;top:1006px;width:1px;height:37px;background:#cdcdcd;"></div>
<div class="b" style="left:484px;top:1006px;width:1px;height:37px;background:#cdcdcd;"></div>
<div class="b" style="left:834px;top:1006px;width:1px;height:37px;background:#cdcdcd;"></div>
<div class="b" style="left:934px;top:1006px;width:1px;height:37px;background:#cdcdcd;"></div>
<div class="b" style="left:1084px;top:1006px;width:1px;height:37px;background:#cdcdcd;"></div>
<div class="b" style="left:1234px;top:1006px;width:1px;height:37px;background:#cdcdcd;"></div>
<div class="b" style="left:1374px;top:1006px;width:1px;height:37px;background:#cdcdcd;"></div>
<div class="b" style="left:1514px;top:1006px;width:1px;height:37px;background:#cdcdcd;"></div>
<svg class="b" style="left:364px;top:1016.5px;" width="16" height="16" viewBox="0 0 16 16"><rect x="0.6" y="0.6" width="14.8" height="14.8" rx="0.8" fill="none" stroke="#444" stroke-width="1.15"/><path d="M3.2 5.4 H12.8 M3.2 10.4 H12.8" stroke="#444" stroke-width="0.9"/><circle cx="11" cy="5.4" r="1.4" fill="#f2f2f2" stroke="#444" stroke-width="0.85"/><circle cx="7.1" cy="10.4" r="1.4" fill="#f2f2f2" stroke="#444" stroke-width="0.85"/></svg>
<span class="t" style="left:413.64px;top:1016.79px;font-size:13.6px;color:#5a5a5a;transform:scaleX(0.9019);transform-origin:0 0;">Číslo</span>
<svg class="b" style="left:467px;top:1019.9px;" width="8" height="6" viewBox="0 0 8 6"><path d="M0.8 0.6 L7.2 0.6 L4 5.2 Z" fill="none" stroke="#444" stroke-width="1.2" stroke-linejoin="round"/></svg>
<span class="t" style="left:493.46px;top:1016.79px;font-size:13.6px;font-weight:bold;color:#000;transform:scaleX(0.8882);transform-origin:0 0;">Název dodavatele</span>
<svg class="b" style="left:599.5px;top:1016.6999999999999px;" width="13" height="13" viewBox="0 0 13 13"><path d="M6.5 12.6 V1 M1.2 6.2 L6.5 0.9 L11.8 6.2" fill="none" stroke="#000" stroke-width="1.3"/></svg>
<svg class="b" style="left:817px;top:1019.9px;" width="8" height="6" viewBox="0 0 8 6"><path d="M0.8 0.6 L7.2 0.6 L4 5.2 Z" fill="none" stroke="#444" stroke-width="1.2" stroke-linejoin="round"/></svg>
<span class="t" style="left:842.96px;top:1016.79px;font-size:13.6px;color:#5a5a5a;transform:scaleX(0.8519);transform-origin:0 0;">IČO</span>
<svg class="b" style="left:917px;top:1019.9px;" width="8" height="6" viewBox="0 0 8 6"><path d="M0.8 0.6 L7.2 0.6 L4 5.2 Z" fill="none" stroke="#444" stroke-width="1.2" stroke-linejoin="round"/></svg>
<span class="t" style="left:943.29px;top:1016.79px;font-size:13.6px;color:#5a5a5a;transform:scaleX(0.9274);transform-origin:0 0;">Datum podání</span>
<svg class="b" style="left:1067px;top:1019.9px;" width="8" height="6" viewBox="0 0 8 6"><path d="M0.8 0.6 L7.2 0.6 L4 5.2 Z" fill="none" stroke="#444" stroke-width="1.2" stroke-linejoin="round"/></svg>
<span class="t" style="left:1093.07px;top:1016.79px;font-size:13.6px;color:#5a5a5a;transform:scaleX(0.8726);transform-origin:0 0;">Stav</span>
<svg class="b" style="left:1217px;top:1019.9px;" width="8" height="6" viewBox="0 0 8 6"><path d="M0.8 0.6 L7.2 0.6 L4 5.2 Z" fill="none" stroke="#444" stroke-width="1.2" stroke-linejoin="round"/></svg>
<span class="t" style="left:1243.29px;top:1016.79px;font-size:13.6px;color:#5a5a5a;transform:scaleX(0.9248);transform-origin:0 0;">Podepsána</span>
<svg class="b" style="left:1357px;top:1019.9px;" width="8" height="6" viewBox="0 0 8 6"><path d="M0.8 0.6 L7.2 0.6 L4 5.2 Z" fill="none" stroke="#444" stroke-width="1.2" stroke-linejoin="round"/></svg>
<span class="t" style="left:1383.28px;top:1016.79px;font-size:13.6px;color:#5a5a5a;transform:scaleX(0.9411);transform-origin:0 0;">Listinná podoba</span>
<svg class="b" style="left:1497px;top:1019.9px;" width="8" height="6" viewBox="0 0 8 6"><path d="M0.8 0.6 L7.2 0.6 L4 5.2 Z" fill="none" stroke="#444" stroke-width="1.2" stroke-linejoin="round"/></svg>
<div class="b" style="left:1515px;top:1006px;width:46px;height:36px;overflow:hidden;">
<span class="t" style="left:8.84px;top:10.79px;font-size:13.6px;color:#5a5a5a;transform:scaleX(0.9112);transform-origin:0 0;">Označen jako nepodaný</span></div>
<div class="b" style="left:340px;top:1068px;width:1220px;height:1px;background:#dcdcdc;"></div>
<svg class="b" style="left:351px;top:1053.1px;" width="17" height="6" viewBox="0 0 17 6"><circle cx="2.1" cy="2.8" r="1.75" fill="none" stroke="#1e73b4" stroke-width="1.15"/><circle cx="8" cy="2.8" r="1.75" fill="none" stroke="#1e73b4" stroke-width="1.15"/><circle cx="13.9" cy="2.8" r="1.75" fill="none" stroke="#1e73b4" stroke-width="1.15"/></svg>
<svg class="b" style="left:376.9px;top:1047.55px;" width="17" height="17" viewBox="0 0 17 17"><circle cx="8.4" cy="8.3" r="7.25" fill="none" stroke="#1e73b4" stroke-width="1.15"/><circle cx="8.3" cy="5.1" r="0.9" fill="#1e73b4"/><path d="M7 7 H8.4 V10.3 Q8.4 11.5 10 11.5" fill="none" stroke="#1e73b4" stroke-width="1.15" stroke-linecap="round"/></svg>
<span class="t" style="left:412.85px;top:1049.69px;font-size:13.6px;color:#000;transform:scaleX(0.9480);transform-origin:0 0;">001</span>
<span class="t" style="left:492.63px;top:1049.69px;font-size:13.6px;color:#000;transform:scaleX(0.9363);transform-origin:0 0;">Dodavatel - školení 2</span>
<span class="t" style="left:843.02px;top:1049.69px;font-size:13.6px;color:#000;transform:scaleX(0.9583);transform-origin:0 0;">12345678</span>
<span class="t" style="left:943.46px;top:1049.69px;font-size:13.6px;color:#000;transform:scaleX(0.9418);transform-origin:0 0;">22. 5. 2025 8:41</span>
<span class="t" style="left:1092.48px;top:1049.69px;font-size:13.6px;color:#000;transform:scaleX(0.9382);transform-origin:0 0;">Podána</span>
<svg class="b" style="left:1300.5px;top:1049.9px;" width="9" height="9" viewBox="0 0 9 9"><path d="M1 1 L8 8 M8 1 L1 8" stroke="#d32525" stroke-width="2.2" stroke-linecap="butt"/></svg>
<svg class="b" style="left:1440.5px;top:1049.9px;" width="9" height="9" viewBox="0 0 9 9"><path d="M1 1 L8 8 M8 1 L1 8" stroke="#d32525" stroke-width="2.2" stroke-linecap="butt"/></svg>
<div class="b" style="left:340px;top:1093px;width:1220px;height:1px;background:#dcdcdc;"></div>
<svg class="b" style="left:351px;top:1078.1px;" width="17" height="6" viewBox="0 0 17 6"><circle cx="2.1" cy="2.8" r="1.75" fill="none" stroke="#1e73b4" stroke-width="1.15"/><circle cx="8" cy="2.8" r="1.75" fill="none" stroke="#1e73b4" stroke-width="1.15"/><circle cx="13.9" cy="2.8" r="1.75" fill="none" stroke="#1e73b4" stroke-width="1.15"/></svg>
<svg class="b" style="left:376.9px;top:1072.55px;" width="17" height="17" viewBox="0 0 17 17"><circle cx="8.4" cy="8.3" r="7.25" fill="none" stroke="#1e73b4" stroke-width="1.15"/><circle cx="8.3" cy="5.1" r="0.9" fill="#1e73b4"/><path d="M7 7 H8.4 V10.3 Q8.4 11.5 10 11.5" fill="none" stroke="#1e73b4" stroke-width="1.15" stroke-linecap="round"/></svg>
<span class="t" style="left:412.85px;top:1074.69px;font-size:13.6px;color:#000;transform:scaleX(0.9480);transform-origin:0 0;">002</span>
<span class="t" style="left:492.63px;top:1074.69px;font-size:13.6px;color:#000;transform:scaleX(0.9363);transform-origin:0 0;">Dodavatel - školení 3</span>
<span class="t" style="left:843.02px;top:1074.69px;font-size:13.6px;color:#000;transform:scaleX(0.9583);transform-origin:0 0;">12345678</span>
<span class="t" style="left:943.46px;top:1074.69px;font-size:13.6px;color:#000;transform:scaleX(0.9418);transform-origin:0 0;">22. 5. 2025 8:42</span>
<span class="t" style="left:1092.48px;top:1074.69px;font-size:13.6px;color:#000;transform:scaleX(0.9382);transform-origin:0 0;">Podána</span>
<svg class="b" style="left:1300.5px;top:1074.9px;" width="9" height="9" viewBox="0 0 9 9"><path d="M1 1 L8 8 M8 1 L1 8" stroke="#d32525" stroke-width="2.2" stroke-linecap="butt"/></svg>
<svg class="b" style="left:1440.5px;top:1074.9px;" width="9" height="9" viewBox="0 0 9 9"><path d="M1 1 L8 8 M8 1 L1 8" stroke="#d32525" stroke-width="2.2" stroke-linecap="butt"/></svg>
<div class="b" style="left:340px;top:1118px;width:1220px;height:1px;background:#dcdcdc;"></div>
<svg class="b" style="left:351px;top:1103.1px;" width="17" height="6" viewBox="0 0 17 6"><circle cx="2.1" cy="2.8" r="1.75" fill="none" stroke="#1e73b4" stroke-width="1.15"/><circle cx="8" cy="2.8" r="1.75" fill="none" stroke="#1e73b4" stroke-width="1.15"/><circle cx="13.9" cy="2.8" r="1.75" fill="none" stroke="#1e73b4" stroke-width="1.15"/></svg>
<svg class="b" style="left:376.9px;top:1097.55px;" width="17" height="17" viewBox="0 0 17 17"><circle cx="8.4" cy="8.3" r="7.25" fill="none" stroke="#1e73b4" stroke-width="1.15"/><circle cx="8.3" cy="5.1" r="0.9" fill="#1e73b4"/><path d="M7 7 H8.4 V10.3 Q8.4 11.5 10 11.5" fill="none" stroke="#1e73b4" stroke-width="1.15" stroke-linecap="round"/></svg>
<span class="t" style="left:412.85px;top:1099.69px;font-size:13.6px;color:#000;transform:scaleX(0.9480);transform-origin:0 0;">003</span>
<span class="t" style="left:492.63px;top:1099.69px;font-size:13.6px;color:#000;transform:scaleX(0.9363);transform-origin:0 0;">Dodavatel - školení 5</span>
<span class="t" style="left:843.02px;top:1099.69px;font-size:13.6px;color:#000;transform:scaleX(0.9583);transform-origin:0 0;">12345678</span>
<span class="t" style="left:943.46px;top:1099.69px;font-size:13.6px;color:#000;transform:scaleX(0.9418);transform-origin:0 0;">22. 5. 2025 8:43</span>
<span class="t" style="left:1092.48px;top:1099.69px;font-size:13.6px;color:#000;transform:scaleX(0.9382);transform-origin:0 0;">Podána</span>
<svg class="b" style="left:1300.5px;top:1099.9px;" width="9" height="9" viewBox="0 0 9 9"><path d="M1 1 L8 8 M8 1 L1 8" stroke="#d32525" stroke-width="2.2" stroke-linecap="butt"/></svg>
<svg class="b" style="left:1440.5px;top:1099.9px;" width="9" height="9" viewBox="0 0 9 9"><path d="M1 1 L8 8 M8 1 L1 8" stroke="#d32525" stroke-width="2.2" stroke-linecap="butt"/></svg>
<div class="b" style="left:340px;top:1143px;width:1220px;height:1px;background:#dcdcdc;"></div>
<svg class="b" style="left:351px;top:1128.1px;" width="17" height="6" viewBox="0 0 17 6"><circle cx="2.1" cy="2.8" r="1.75" fill="none" stroke="#1e73b4" stroke-width="1.15"/><circle cx="8" cy="2.8" r="1.75" fill="none" stroke="#1e73b4" stroke-width="1.15"/><circle cx="13.9" cy="2.8" r="1.75" fill="none" stroke="#1e73b4" stroke-width="1.15"/></svg>
<svg class="b" style="left:376.9px;top:1122.55px;" width="17" height="17" viewBox="0 0 17 17"><circle cx="8.4" cy="8.3" r="7.25" fill="none" stroke="#1e73b4" stroke-width="1.15"/><circle cx="8.3" cy="5.1" r="0.9" fill="#1e73b4"/><path d="M7 7 H8.4 V10.3 Q8.4 11.5 10 11.5" fill="none" stroke="#1e73b4" stroke-width="1.15" stroke-linecap="round"/></svg>
<span class="t" style="left:412.85px;top:1124.69px;font-size:13.6px;color:#000;transform:scaleX(0.9480);transform-origin:0 0;">004</span>
<span class="t" style="left:492.63px;top:1124.69px;font-size:13.6px;color:#000;transform:scaleX(0.9363);transform-origin:0 0;">Dodavatel - školení 6</span>
<span class="t" style="left:843.02px;top:1124.69px;font-size:13.6px;color:#000;transform:scaleX(0.9583);transform-origin:0 0;">45359326</span>
<span class="t" style="left:943.46px;top:1124.69px;font-size:13.6px;color:#000;transform:scaleX(0.9418);transform-origin:0 0;">22. 5. 2025 8:43</span>
<span class="t" style="left:1092.48px;top:1124.69px;font-size:13.6px;color:#000;transform:scaleX(0.9382);transform-origin:0 0;">Podána</span>
<svg class="b" style="left:1300.5px;top:1124.9px;" width="9" height="9" viewBox="0 0 9 9"><path d="M1 1 L8 8 M8 1 L1 8" stroke="#d32525" stroke-width="2.2" stroke-linecap="butt"/></svg>
<svg class="b" style="left:1440.5px;top:1124.9px;" width="9" height="9" viewBox="0 0 9 9"><path d="M1 1 L8 8 M8 1 L1 8" stroke="#d32525" stroke-width="2.2" stroke-linecap="butt"/></svg>
<div class="b" style="left:340px;top:1168px;width:1220px;height:1px;background:#dcdcdc;"></div>
<svg class="b" style="left:351px;top:1153.1px;" width="17" height="6" viewBox="0 0 17 6"><circle cx="2.1" cy="2.8" r="1.75" fill="none" stroke="#1e73b4" stroke-width="1.15"/><circle cx="8" cy="2.8" r="1.75" fill="none" stroke="#1e73b4" stroke-width="1.15"/><circle cx="13.9" cy="2.8" r="1.75" fill="none" stroke="#1e73b4" stroke-width="1.15"/></svg>
<svg class="b" style="left:376.9px;top:1147.55px;" width="17" height="17" viewBox="0 0 17 17"><circle cx="8.4" cy="8.3" r="7.25" fill="none" stroke="#1e73b4" stroke-width="1.15"/><circle cx="8.3" cy="5.1" r="0.9" fill="#1e73b4"/><path d="M7 7 H8.4 V10.3 Q8.4 11.5 10 11.5" fill="none" stroke="#1e73b4" stroke-width="1.15" stroke-linecap="round"/></svg>
<span class="t" style="left:412.85px;top:1149.69px;font-size:13.6px;color:#000;transform:scaleX(0.9480);transform-origin:0 0;">006</span>
<span class="t" style="left:492.63px;top:1149.69px;font-size:13.6px;color:#000;transform:scaleX(0.9363);transform-origin:0 0;">Dodavatel - školení 6</span>
<span class="t" style="left:843.02px;top:1149.69px;font-size:13.6px;color:#000;transform:scaleX(0.9583);transform-origin:0 0;">45359326</span>
<span class="t" style="left:943.46px;top:1149.69px;font-size:13.6px;color:#000;transform:scaleX(0.9418);transform-origin:0 0;">22. 5. 2025 8:44</span>
<span class="t" style="left:1092.48px;top:1149.69px;font-size:13.6px;color:#000;transform:scaleX(0.9382);transform-origin:0 0;">Podána</span>
<svg class="b" style="left:1300.5px;top:1149.9px;" width="9" height="9" viewBox="0 0 9 9"><path d="M1 1 L8 8 M8 1 L1 8" stroke="#d32525" stroke-width="2.2" stroke-linecap="butt"/></svg>
<svg class="b" style="left:1440.6px;top:1149.9px;" width="10" height="9" viewBox="0 0 10 9"><path d="M0.8 5 L3.6 7.8 L9.4 1" fill="none" stroke="#36b336" stroke-width="2.1"/></svg>
<div class="b" style="left:340px;top:1193px;width:1220px;height:1px;background:#dcdcdc;"></div>
<svg class="b" style="left:351px;top:1178.1px;" width="17" height="6" viewBox="0 0 17 6"><circle cx="2.1" cy="2.8" r="1.75" fill="none" stroke="#1e73b4" stroke-width="1.15"/><circle cx="8" cy="2.8" r="1.75" fill="none" stroke="#1e73b4" stroke-width="1.15"/><circle cx="13.9" cy="2.8" r="1.75" fill="none" stroke="#1e73b4" stroke-width="1.15"/></svg>
<svg class="b" style="left:376.9px;top:1172.55px;" width="17" height="17" viewBox="0 0 17 17"><circle cx="8.4" cy="8.3" r="7.25" fill="none" stroke="#1e73b4" stroke-width="1.15"/><circle cx="8.3" cy="5.1" r="0.9" fill="#1e73b4"/><path d="M7 7 H8.4 V10.3 Q8.4 11.5 10 11.5" fill="none" stroke="#1e73b4" stroke-width="1.15" stroke-linecap="round"/></svg>
<span class="t" style="left:412.85px;top:1174.69px;font-size:13.6px;color:#000;transform:scaleX(0.9480);transform-origin:0 0;">005</span>
<span class="t" style="left:492.63px;top:1174.69px;font-size:13.6px;color:#000;transform:scaleX(0.9363);transform-origin:0 0;">Dodavatel - školení 7</span>
<span class="t" style="left:843.02px;top:1174.69px;font-size:13.6px;color:#000;transform:scaleX(0.9583);transform-origin:0 0;">12345678</span>
<span class="t" style="left:943.46px;top:1174.69px;font-size:13.6px;color:#000;transform:scaleX(0.9418);transform-origin:0 0;">22. 5. 2025 8:44</span>
<span class="t" style="left:1092.48px;top:1174.69px;font-size:13.6px;color:#000;transform:scaleX(0.9382);transform-origin:0 0;">Podána</span>
<svg class="b" style="left:1300.5px;top:1174.9px;" width="9" height="9" viewBox="0 0 9 9"><path d="M1 1 L8 8 M8 1 L1 8" stroke="#d32525" stroke-width="2.2" stroke-linecap="butt"/></svg>
<svg class="b" style="left:1440.5px;top:1174.9px;" width="9" height="9" viewBox="0 0 9 9"><path d="M1 1 L8 8 M8 1 L1 8" stroke="#d32525" stroke-width="2.2" stroke-linecap="butt"/></svg>
<div class="b" style="left:1503px;top:1005px;width:58px;height:189px;background:linear-gradient(to right, rgba(0,0,0,0) 0%, rgba(0,0,0,.015) 35%, rgba(0,0,0,.05) 70%, rgba(0,0,0,.13) 100%);"></div>
<div class="b" style="left:340px;top:1194px;width:1220px;height:12px;background:#eeeeee;border-radius:0 0 8px 8px;"></div>
<div class="b" style="left:341.5px;top:1196px;width:1096.5px;height:8px;background:#bdbdbd;border-radius:4px;"></div>
<svg class="b" style="left:346.5px;top:977.2px;" width="17" height="17" viewBox="0 0 17 17"><path d="M8.2 15.9 H1.8 A1.1 1.1 0 0 1 0.7 14.8 V4.2 A1.1 1.1 0 0 1 1.8 3.1 H3.4 M10.6 3.1 H12 A1.1 1.1 0 0 1 13.1 4.2 V6.4" fill="none" stroke="#1e73b4" stroke-width="1.15"/><path d="M3.5 5.3 V2.9 H5.5 A1.55 1.55 0 0 1 8.5 2.9 H10.5 V5.3 Z" fill="none" stroke="#1e73b4" stroke-width="1.05" stroke-linejoin="round"/><path d="M3 7.9 H4.7 M5.9 7.9 H8.8 M3 10.3 H4.7 M5.9 10.3 H7.2 M3 12.7 H4.7 M5.9 12.7 H7" stroke="#1e73b4" stroke-width="1.1"/><circle cx="12" cy="11.4" r="2.9" fill="none" stroke="#1e73b4" stroke-width="1.1"/><path d="M14.34 12.75 L15.90 13.65 M12.00 14.10 L12.00 15.90 M9.66 12.75 L8.10 13.65 M9.66 10.05 L8.10 9.15 M12.00 8.70 L12.00 6.90 M14.34 10.05 L15.90 9.15 " stroke="#1e73b4" stroke-width="1.9"/><circle cx="12" cy="11.4" r="0.9" fill="#1e73b4"/></svg>
<span class="t" style="left:367.19px;top:980.09px;font-size:13.6px;color:#1e73b4;transform:scaleX(0.9317);transform-origin:0 0;">Evidovat žádost o účast</span>
<svg class="b" style="left:506px;top:977px;" width="6" height="18"><rect x="2.20" y="0" width="1.4" height="18" fill="#1a5f98"/></svg>
<svg class="b" style="left:510px;top:970px;" width="126" height="34"><rect x="3.8" y="2.8" width="116.9" height="26.8" rx="5.5" fill="#4caf50" stroke="#7cc47f" stroke-width="1"/></svg>
<svg class="b" style="left:520.6px;top:977.2px;" width="17" height="17" viewBox="0 0 17 17"><path d="M8.2 15.9 H1.8 A1.1 1.1 0 0 1 0.7 14.8 V4.2 A1.1 1.1 0 0 1 1.8 3.1 H3.4 M10.6 3.1 H12 A1.1 1.1 0 0 1 13.1 4.2 V6.4" fill="none" stroke="#fff" stroke-width="1.15"/><path d="M3.5 5.3 V2.9 H5.5 A1.55 1.55 0 0 1 8.5 2.9 H10.5 V5.3 Z" fill="none" stroke="#fff" stroke-width="1.05" stroke-linejoin="round"/><path d="M3 7.9 H4.7 M5.9 7.9 H8.8 M3 10.3 H4.7 M5.9 10.3 H7.2 M3 12.7 H4.7 M5.9 12.7 H7" stroke="#fff" stroke-width="1.1"/><circle cx="12" cy="11.4" r="2.9" fill="none" stroke="#fff" stroke-width="1.1"/><path d="M14.34 12.75 L15.90 13.65 M12.00 14.10 L12.00 15.90 M9.66 12.75 L8.10 13.65 M9.66 10.05 L8.10 9.15 M12.00 8.70 L12.00 6.90 M14.34 10.05 L15.90 9.15 " stroke="#fff" stroke-width="1.9"/><circle cx="12" cy="11.4" r="0.9" fill="#fff"/></svg>
<span class="t" style="left:539.66px;top:980.73px;font-size:12.6px;color:#fff;transform:scaleX(0.9115);transform-origin:0 0;">Zahájit otevírání</span>
<svg class="b" style="left:505px;top:962px;" width="132" height="44"><rect x="2.9" y="2.8" width="126.4" height="38.6" fill="none" stroke="#e01c28" stroke-width="1.25"/></svg>
<svg class="b" style="left:642px;top:977.7px;" width="16" height="16" viewBox="0 0 16 16"><path d="M3.6 5.2 V1.2 A0.6 0.6 0 0 1 4.2 0.6 H11.8 A0.6 0.6 0 0 1 12.4 1.2 V5.2" fill="none" stroke="#1e73b4" stroke-width="1.2"/><rect x="0.6" y="5.2" width="14.8" height="7" rx="1.6" fill="none" stroke="#1e73b4" stroke-width="1.2"/><rect x="3.6" y="9" width="8.8" height="6.4" rx="0.6" fill="#fff" stroke="#1e73b4" stroke-width="1.2"/><path d="M5.4 11.2 H10.6 M5.4 13.2 H9 M2.4 7.4 H3.6" stroke="#1e73b4" stroke-width="1"/></svg>
<svg class="b" style="left:662px;top:982.7px;" width="8" height="6" viewBox="0 0 8 6"><path d="M0.8 0.6 L7.2 0.6 L4 5.2 Z" fill="none" stroke="#1e73b4" stroke-width="1.2" stroke-linejoin="round"/></svg>
<svg class="b" style="left:679px;top:977px;" width="6" height="18"><rect x="1.88" y="0" width="1.25" height="18" fill="#1e73b4"/></svg>
<svg class="b" style="left:691.4px;top:977.6px;" width="16" height="16" viewBox="0 0 16 16"><path d="M5 5.6 H2 V15.2 H13.6 V5.6 H10.6" fill="none" stroke="#1e73b4" stroke-width="1.2" stroke-linejoin="round"/><path d="M7.8 10.4 V1 M5.2 3.4 L7.8 0.8 L10.4 3.4" fill="none" stroke="#1e73b4" stroke-width="1.2" stroke-linecap="round" stroke-linejoin="round"/></svg>
<svg class="b" style="left:710px;top:982.7px;" width="8" height="6" viewBox="0 0 8 6"><path d="M0.8 0.6 L7.2 0.6 L4 5.2 Z" fill="none" stroke="#1e73b4" stroke-width="1.2" stroke-linejoin="round"/></svg>
<svg class="b" style="left:727px;top:977px;" width="6" height="18"><rect x="1.88" y="0" width="1.25" height="18" fill="#1e73b4"/></svg>
<svg class="b" style="left:1478.5px;top:977.5px;" width="18" height="18" viewBox="0 0 18 18"><path d="M1.4 1.4 H16.7 Q16.7 6.6 11.1 8.8 V14.7 L7.3 16.4 V8.8 Q1.4 6.6 1.4 1.4 Z" fill="none" stroke="#1e73b4" stroke-width="1.25" stroke-linejoin="round"/></svg>
<svg class="b" style="left:1501px;top:977px;" width="6" height="18"><rect x="1.38" y="0" width="1.25" height="18" fill="#1e73b4"/></svg>
<svg class="b" style="left:1515px;top:983.5px;" width="8" height="6" viewBox="0 0 8 6"><path d="M0.8 0.6 L7.2 0.6 L4 5.2 Z" fill="none" stroke="#1e73b4" stroke-width="1.2" stroke-linejoin="round"/></svg>
<span class="t" style="left:1529.44px;top:982.89px;font-size:13.6px;color:#1e73b4;transform:scaleX(0.9732);transform-origin:0 0;">MW</span>
<svg class="b" style="left:1558px;top:977px;" width="6" height="18"><rect x="1.60" y="0" width="1.4" height="18" fill="#1e73b4"/></svg>
</body></html>
